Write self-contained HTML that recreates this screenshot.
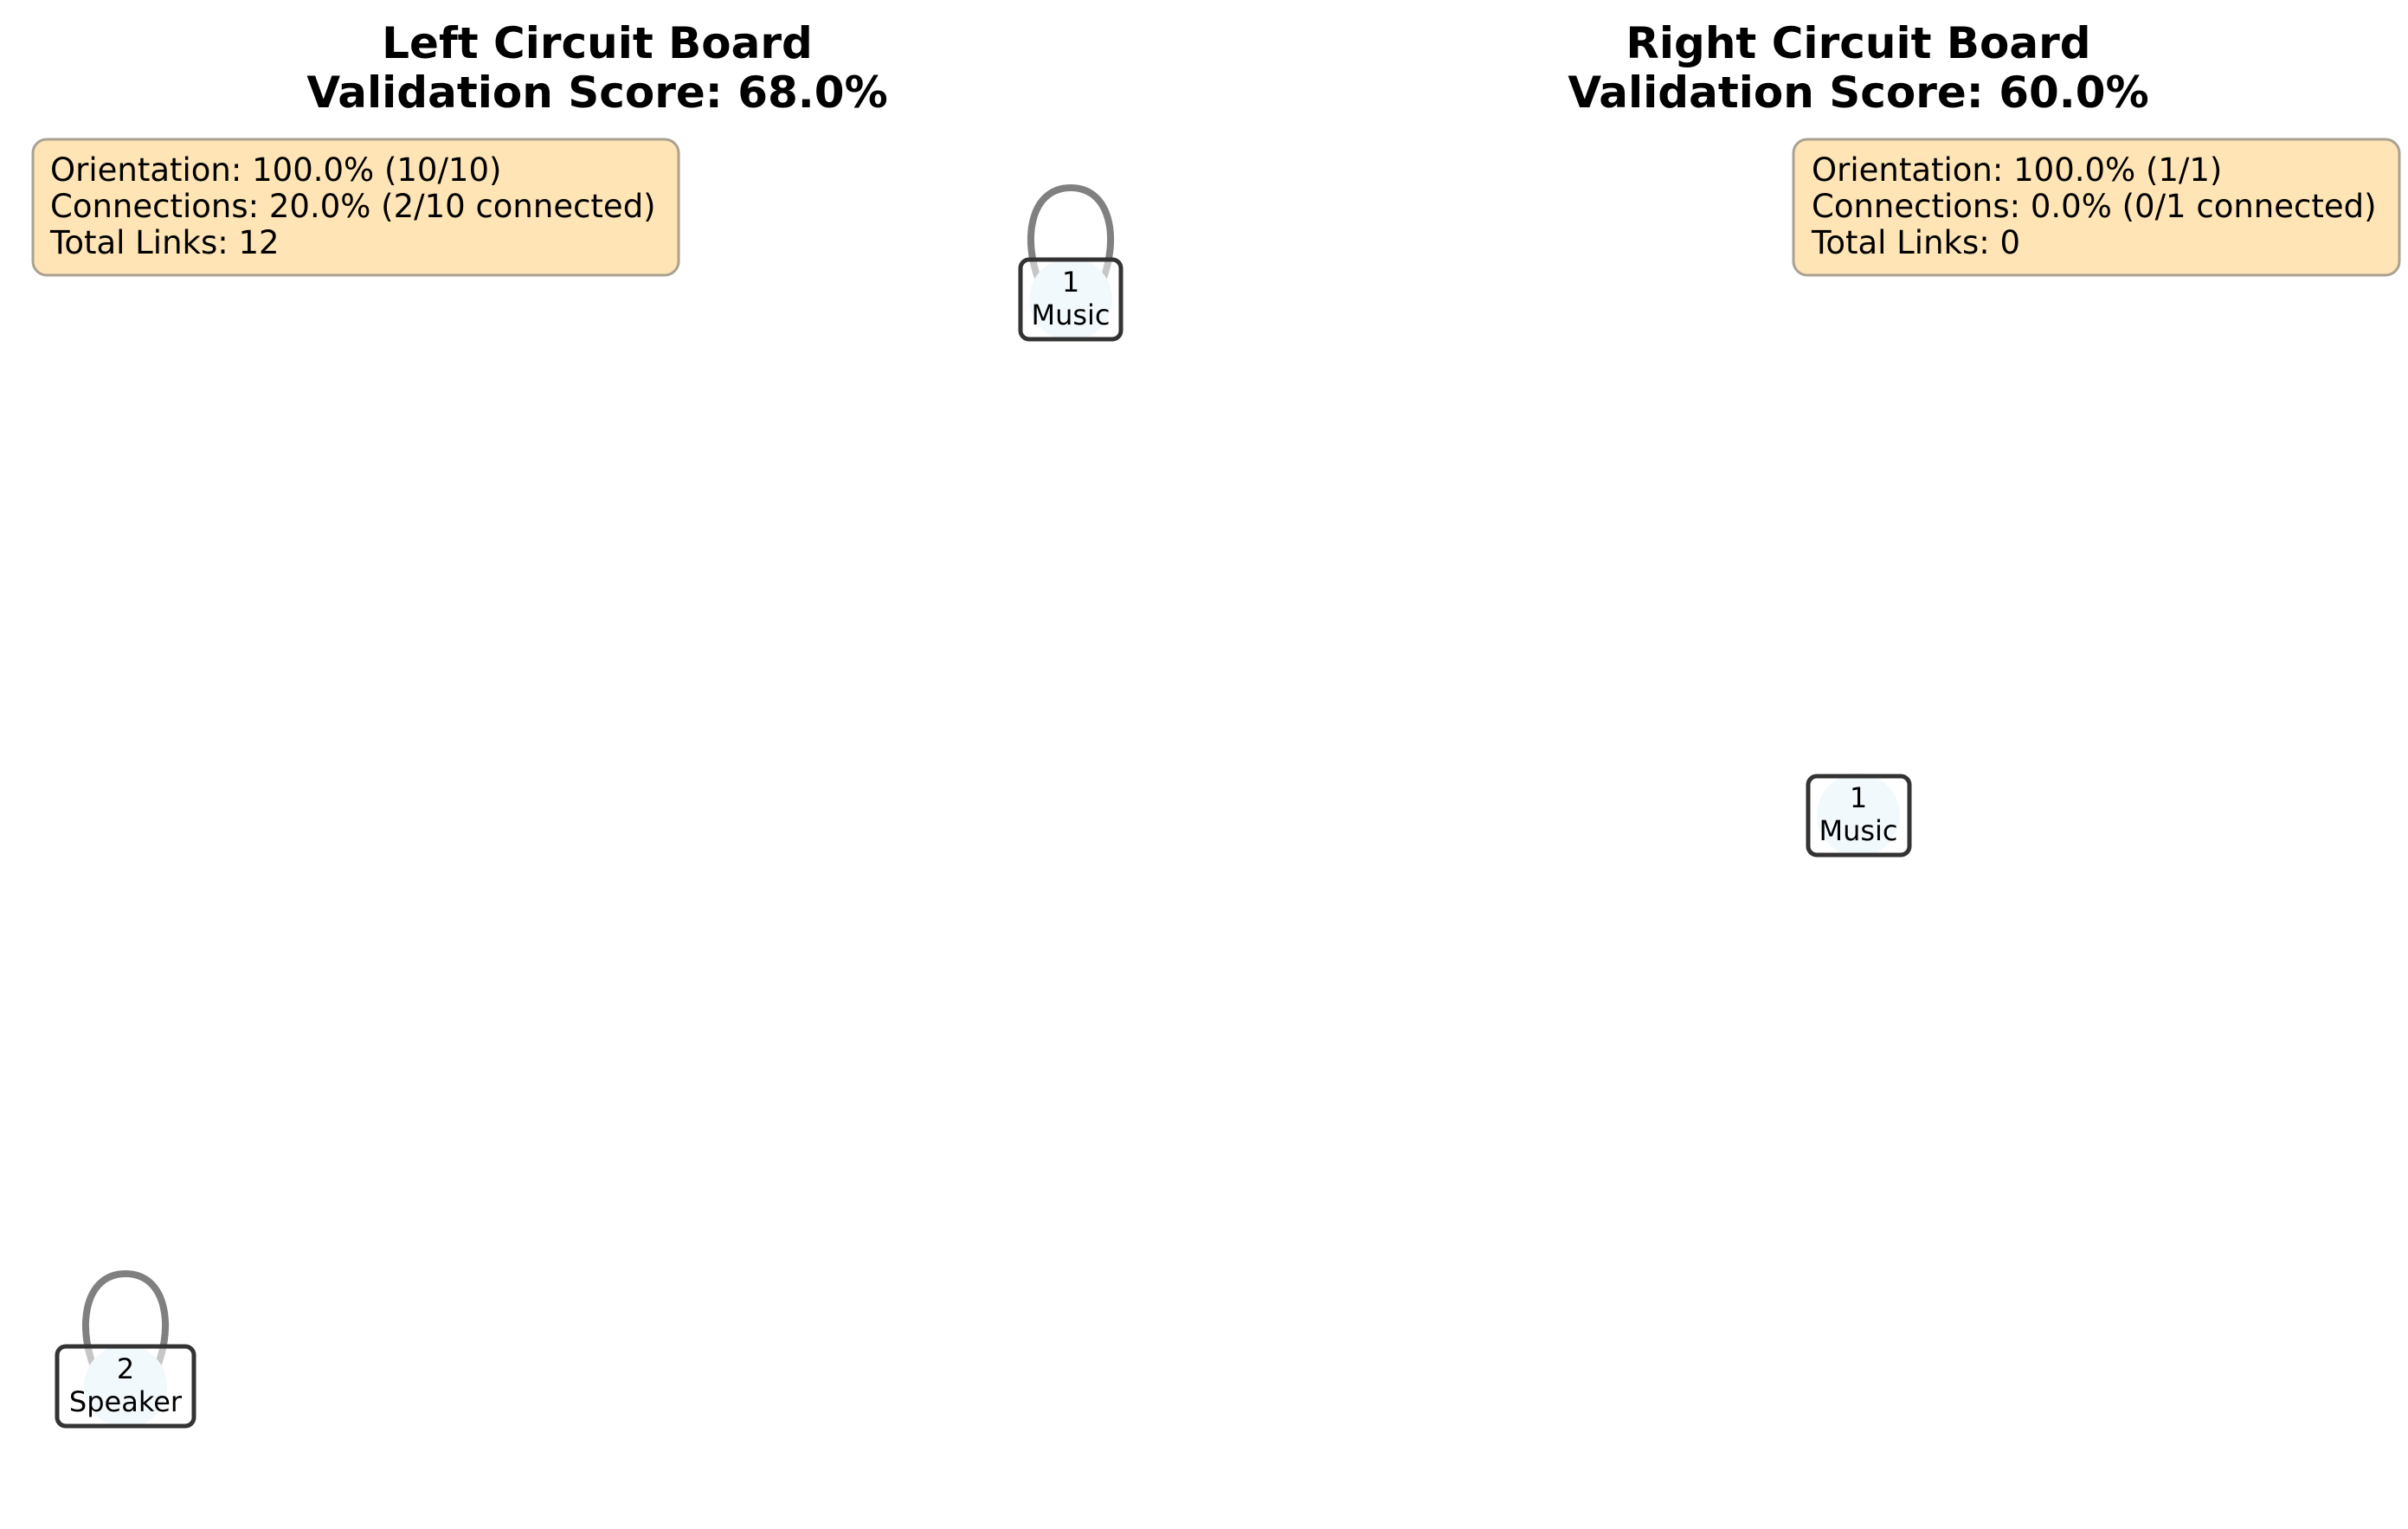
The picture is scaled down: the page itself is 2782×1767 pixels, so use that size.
<!DOCTYPE html>
<html><head><meta charset="utf-8"><style>
html,body{margin:0;padding:0;background:#fff;}
svg{display:block;}
text{font-family:"DejaVu Sans","Liberation Sans",sans-serif;}
</style></head><body>
<svg width="2782" height="1767" viewBox="0 0 2782 1767" xmlns="http://www.w3.org/2000/svg">
<rect width="2782" height="1767" fill="#fff"/>
<g font-weight="bold" font-size="50" text-anchor="middle" fill="#000">
<text x="690" y="67">Left Circuit Board</text>
<text x="690" y="124">Validation Score: 68.0%</text>
<text x="2147" y="67">Right Circuit Board</text>
<text x="2147" y="124">Validation Score: 60.0%</text>
</g>
<rect x="38" y="161" width="746" height="157" rx="16" fill="#ffe4b5" stroke="#aaa192" stroke-width="3"/>
<rect x="2072" y="161" width="700" height="157" rx="16" fill="#ffe4b5" stroke="#aaa192" stroke-width="3"/>
<g font-size="37" fill="#000">
<text x="58" y="209">Orientation: 100.0% (10/10)</text>
<text x="58" y="251">Connections: 20.0% (2/10 connected)</text>
<text x="58" y="293">Total Links: 12</text>
<text x="2093" y="209">Orientation: 100.0% (1/1)</text>
<text x="2093" y="251">Connections: 0.0% (0/1 connected)</text>
<text x="2093" y="293">Total Links: 0</text>
</g>
<g fill="none" stroke="#808080" stroke-width="8">
<path d="M1205,335 C1180,285 1187,217 1237,217 C1287,217 1294,285 1269,335"/>
<path d="M113,1590 C88,1540 95,1472 145,1472 C195,1472 202,1540 177,1590"/>
</g>
<g fill="#e3f2f8">
<circle cx="1237" cy="346" r="48"/>
<circle cx="145" cy="1602" r="48"/>
<circle cx="2147" cy="942" r="48"/>
</g>
<g fill="#fff" fill-opacity="0.55" stroke="#333" stroke-width="5">
<rect x="1179" y="300" width="116" height="92" rx="10"/>
<rect x="66" y="1556" width="158" height="92" rx="10"/>
<rect x="2089" y="897" width="117" height="91" rx="10"/>
</g>
<g font-size="32" text-anchor="middle" fill="#000">
<text x="1237" y="337">1</text>
<text x="1237" y="375">Music</text>
<text x="145" y="1593">2</text>
<text x="145" y="1631">Speaker</text>
<text x="2147" y="933">1</text>
<text x="2147" y="971">Music</text>
</g>
</svg>
</body></html>
